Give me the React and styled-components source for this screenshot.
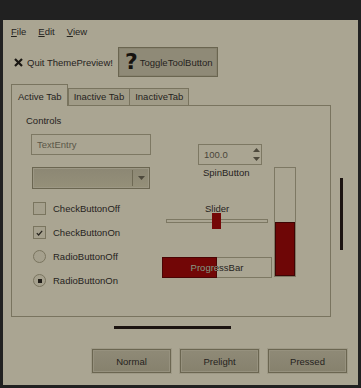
import styled, { createGlobalStyle } from "styled-components";

const GlobalStyle = createGlobalStyle`
  html, body {
    margin: 0;
    padding: 0;
    background: #212121;
  }
  body {
    font-family: "Liberation Sans", Arial, sans-serif;
    font-size: 9.5px;
    line-height: 11px;
    color: #26231d;
  }
  * { box-sizing: border-box; }
`;

const Window = styled.div`
  margin: 20px 3px 0 3px;
  width: 355px;
  height: 365px;
  background: #aaa592;
  display: flex;
  flex-direction: column;
`;

const MenuBar = styled.div`
  height: 23px;
  display: flex;
  align-items: center;
  gap: 12px;
  padding-left: 8px;
`;

const MenuItem = styled.span`
  u { text-decoration: underline; }
`;

const ToolBar = styled.div`
  margin-top: 4px;
  height: 30px;
  display: flex;
  align-items: center;
  padding-left: 11px;
`;

const ToolItem = styled.div`
  display: flex;
  align-items: center;
  gap: 4px;
  margin-right: 5px;
`;

const ToggleButton = styled.div`
  height: 30px;
  display: flex;
  align-items: center;
  gap: 2px;
  padding: 0 4px 0 6px;
  background: #8f8a77;
  border: 1px solid #6a6550;
  box-shadow: inset 0 0 0 1px #88836f;
`;

const BigQuestion = styled.span`
  font-family: "DejaVu Sans", sans-serif;
  font-weight: bold;
  font-size: 22px;
  line-height: 22px;
  color: #16130f;
`;

const Middle = styled.div`
  margin-top: 7px;
  display: flex;
  align-items: flex-start;
`;

const Notebook = styled.div`
  margin-left: 8px;
  width: 320px;
  display: flex;
  flex-direction: column;
`;

const Tabs = styled.div`
  display: flex;
  align-items: flex-end;
  height: 21px;
`;

const Tab = styled.div`
  position: relative;
  z-index: ${(p) => (p.$active ? 1 : 0)};
  height: ${(p) => (p.$active ? "22px" : "17px")};
  margin-bottom: ${(p) => (p.$active ? "-1px" : "0")};
  margin-left: ${(p) => (p.$joined ? "-1px" : "0")};
  padding: ${(p) => (p.$active ? "6px 5px 0 6px" : "2px 5px 0 5px")};
  border: 1px solid #79745f;
  border-bottom: none;
  background: ${(p) => (p.$active ? "#aaa592" : "#a09b87")};
  white-space: nowrap;
`;

const Panel = styled.div`
  height: 212px;
  border: 1px solid #79745f;
  padding: 9px 0 0 14px;
  display: flex;
  flex-direction: column;
`;

const Body = styled.div`
  margin: 8px 0 0 5px;
  display: flex;
`;

const LeftCol = styled.div`
  width: 120px;
  display: flex;
  flex-direction: column;
`;

const Entry = styled.div`
  height: 21px;
  border: 1px solid #7d7863;
  padding-left: 5px;
  line-height: 19px;
  color: #5b5748;
`;

const Combo = styled.div`
  margin: 12px 0 0 1px;
  width: 118px;
  height: 22px;
  border: 1px solid #6b6651;
  box-shadow: inset 0 0 0 1px #9c9784;
  background: linear-gradient(#8c8774, #959079);
  display: flex;
  align-items: center;
`;

const ComboText = styled.div`
  flex: 1;
`;

const ComboSep = styled.div`
  width: 1px;
  height: 16px;
  background: #6e6954;
`;

const ComboArrow = styled.div`
  width: 16px;
  display: flex;
  justify-content: center;
  svg { display: block; }
`;

const Checks = styled.div`
  margin: 13px 0 0 2px;
  display: flex;
  flex-direction: column;
  gap: 11px;
`;

const CheckRow = styled.div`
  height: 13px;
  display: flex;
  align-items: center;
  gap: 7px;
`;

const Box = styled.div`
  width: 13px;
  height: 13px;
  border: 1px solid #7a755f;
  border-radius: ${(p) => (p.$round ? "50%" : "0")};
  background: #a5a08d;
  display: flex;
  align-items: center;
  justify-content: center;
`;

const Dot = styled.div`
  width: 4px;
  height: 4px;
  background: #201d18;
`;

const RightArea = styled.div`
  margin-left: 11px;
  display: flex;
`;

const ColA = styled.div`
  width: 110px;
  display: flex;
  flex-direction: column;
`;

const Spin = styled.div`
  margin: 10px 0 0 36px;
  width: 64px;
  height: 21px;
  border: 1px solid #7d7863;
  display: flex;
  align-items: center;
  padding-left: 5px;
  color: #4a463a;
`;

const SpinValue = styled.div`
  flex: 1;
`;

const SpinArrows = styled.div`
  width: 10px;
  display: flex;
  flex-direction: column;
  align-items: center;
  gap: 5px;
  svg { display: block; }
`;

const Caption = styled.div`
  margin: ${(p) => p.$margin};
`;

const Slider = styled.div`
  position: relative;
  margin: -1px 0 0 4px;
  width: 102px;
  height: 16px;
  display: flex;
  align-items: center;
`;

const Trough = styled.div`
  width: 100%;
  height: 4px;
  border: 1px solid #7d7863;
`;

const Knob = styled.div`
  position: absolute;
  left: 46px;
  top: 0;
  width: 9px;
  height: 16px;
  background: #740707;
`;

const Progress = styled.div`
  position: relative;
  margin-top: 28px;
  width: 110px;
  height: 21px;
  border: 1px solid #7d7863;
`;

const ProgressFill = styled.div`
  position: absolute;
  left: -1px;
  top: -1px;
  bottom: -1px;
  background: #720606;
  border: 1px solid #4a0404;
`;

const ProgressLabel = styled.div`
  position: absolute;
  inset: 0;
  line-height: 19px;
  text-align: center;
  color: ${(p) => (p.$light ? "#9b927f" : "#26231d")};
`;

const ColB = styled.div`
  margin-left: 2px;
`;

const VProgress = styled.div`
  margin-top: 33px;
  width: 22px;
  height: 110px;
  border: 1px solid #7d7863;
  display: flex;
  flex-direction: column;
  justify-content: flex-end;
`;

const VFill = styled.div`
  border: 1px solid #3e0404;
  background: #6e0606;
`;

const VBar = styled.div`
  margin: 94px 0 0 9px;
  width: 3px;
  height: 72px;
  background: #1c1411;
`;

const HBar = styled.div`
  margin: 9px 0 0 111px;
  width: 117px;
  height: 3px;
  background: #1c1411;
`;

const ButtonRow = styled.div`
  margin-top: 20px;
  display: flex;
  justify-content: flex-end;
  gap: 9px;
  padding-right: 11px;
`;

const Button = styled.div`
  width: 79px;
  height: 24px;
  border: 1px solid #6b6651;
  box-shadow: 0 0 0 1px #9e9986, inset 0 0 0 1px #96917e;
  background: linear-gradient(#8f8a77, #86816d);
  display: flex;
  align-items: center;
  justify-content: center;
`;

const CloseIcon = () => (
  <svg width="9" height="9" viewBox="0 0 9 9">
    <path d="M1 1 L8 8 M8 1 L1 8" stroke="#1a1713" strokeWidth="2.2" />
  </svg>
);

const Arrow = ({ up }) => (
  <svg width="7" height="4" viewBox="0 0 7 4">
    <path d={up ? "M0 4 L3.5 0 L7 4 Z" : "M0 0 L7 0 L3.5 4 Z"} fill="#4d493c" />
  </svg>
);

const CheckMark = () => (
  <svg width="7" height="6" viewBox="0 0 7 6">
    <path d="M0.8 3.2 L2.6 5 L6.2 0.8" stroke="#26231d" strokeWidth="1.2" fill="none" />
  </svg>
);

export default function App() {
  const fraction = 0.5;
  const pct = `${fraction * 100}%`;
  return (
    <>
      <GlobalStyle />
      <Window>
        <MenuBar>
          <MenuItem><u>F</u>ile</MenuItem>
          <MenuItem><u>E</u>dit</MenuItem>
          <MenuItem><u>V</u>iew</MenuItem>
        </MenuBar>

        <ToolBar>
          <ToolItem>
            <CloseIcon />
            <span>Quit ThemePreview!</span>
          </ToolItem>
          <ToggleButton>
            <BigQuestion>?</BigQuestion>
            <span>ToggleToolButton</span>
          </ToggleButton>
        </ToolBar>

        <Middle>
          <Notebook>
            <Tabs>
              <Tab $active>Active Tab</Tab>
              <Tab>Inactive Tab</Tab>
              <Tab $joined>InactiveTab</Tab>
            </Tabs>
            <Panel>
              <div>Controls</div>
              <Body>
                <LeftCol>
                  <Entry>TextEntry</Entry>
                  <Combo>
                    <ComboText />
                    <ComboSep />
                    <ComboArrow>
                      <Arrow />
                    </ComboArrow>
                  </Combo>
                  <Checks>
                    <CheckRow>
                      <Box />
                      <span>CheckButtonOff</span>
                    </CheckRow>
                    <CheckRow>
                      <Box>
                        <CheckMark />
                      </Box>
                      <span>CheckButtonOn</span>
                    </CheckRow>
                    <CheckRow>
                      <Box $round />
                      <span>RadioButtonOff</span>
                    </CheckRow>
                    <CheckRow>
                      <Box $round>
                        <Dot />
                      </Box>
                      <span>RadioButtonOn</span>
                    </CheckRow>
                  </Checks>
                </LeftCol>

                <RightArea>
                  <ColA>
                    <Spin>
                      <SpinValue>100.0</SpinValue>
                      <SpinArrows>
                        <Arrow up />
                        <Arrow />
                      </SpinArrows>
                    </Spin>
                    <Caption $margin="2px 0 0 41px">SpinButton</Caption>
                    <Caption $margin="25px 0 0 43px">Slider</Caption>
                    <Slider>
                      <Trough />
                      <Knob />
                    </Slider>
                    <Progress>
                      <ProgressFill style={{ width: `calc(${pct} + 1px)` }} />
                      <ProgressLabel>ProgressBar</ProgressLabel>
                      <ProgressLabel
                        $light
                        style={{ clipPath: `inset(0 ${100 - fraction * 100}% 0 0)` }}
                      >
                        ProgressBar
                      </ProgressLabel>
                    </Progress>
                  </ColA>
                  <ColB>
                    <VProgress>
                      <VFill style={{ height: `${fraction * 108}px` }} />
                    </VProgress>
                  </ColB>
                </RightArea>
              </Body>
            </Panel>
          </Notebook>
          <VBar />
        </Middle>

        <HBar />

        <ButtonRow>
          <Button>Normal</Button>
          <Button>Prelight</Button>
          <Button>Pressed</Button>
        </ButtonRow>
      </Window>
    </>
  );
}
